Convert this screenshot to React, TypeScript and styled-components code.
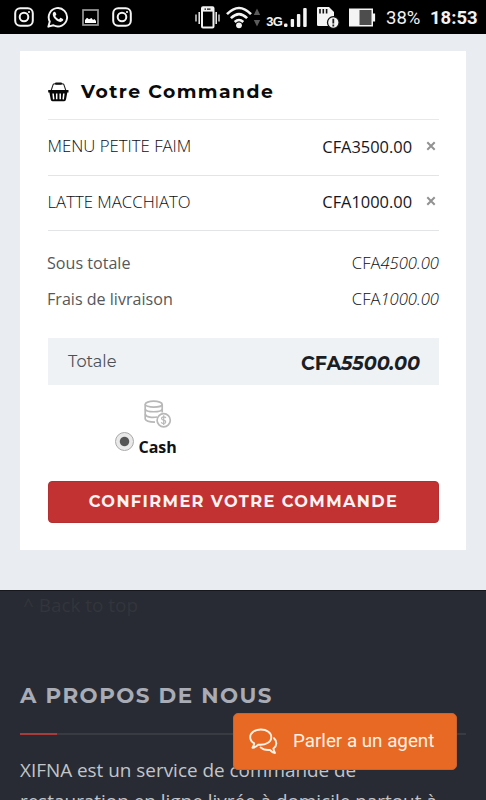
import React from "react";
import styled, { createGlobalStyle } from "styled-components";

const GlobalStyle = createGlobalStyle`
  * { box-sizing: border-box; }
  html, body { margin: 0; padding: 0; height: 800px; overflow: hidden; background: #282b34; }
  h2, h3, p { margin: 0; }
`;

const body = `"Open Sans", "Noto Sans", sans-serif`;
const display = `Montserrat, Inter, sans-serif`;

const Screen = styled.div`
  width: 486px;
  height: 800px;
  overflow: hidden;
  display: flex;
  flex-direction: column;
  font-family: ${body};
  position: relative;
`;

const StatusBar = styled.header`
  height: 34px;
  flex: none;
  background: #000;
  color: #f2f2f2;
  display: flex;
  align-items: center;
  justify-content: space-between;
  padding: 0 8px 0 14px;
`;

const StatusGroup = styled.div<{ $gap: number }>`
  display: flex;
  align-items: center;
  gap: ${(p) => p.$gap}px;
  svg { display: block; flex: none; }
`;

const StatusText = styled.span<{ $bold?: boolean; $width: number }>`
  font: ${(p) => (p.$bold ? 700 : 400)} 18.5px/34px Roboto, sans-serif;
  width: ${(p) => p.$width}px;
  white-space: nowrap;
  padding-top: 2px;
`;

const Main = styled.main`
  height: 556px;
  flex: none;
  background: #e9ecf1;
  padding: 17px 20px 0;
`;

const Card = styled.section`
  height: 499px;
  background: #fff;
  padding: 0 27px 0 28px;
  display: flex;
  flex-direction: column;
`;

const CardHeader = styled.div`
  height: 69px;
  padding-top: 14px;
  display: flex;
  align-items: center;
  gap: 12px;
  border-bottom: 1px solid #e6e8ea;
`;

const CardTitle = styled.h2`
  font: 700 18.8px/24px ${display};
  letter-spacing: 1.45px;
  color: #0a0a0b;
  white-space: nowrap;
`;

const ItemRow = styled.div`
  height: 55.5px;
  display: flex;
  align-items: center;
  border-bottom: 1px solid #e2e4e6;
`;

const ItemName = styled.span`
  flex: 1;
  font-size: 16.75px;
  line-height: 22px;
  font-weight: 300;
  color: #0d0e12;
  margin-left: -0.5px;
  padding-bottom: 2px;
`;

const ItemPrice = styled.span`
  font-size: 16.4px;
  font-weight: 500;
  color: #15161d;
  padding-bottom: 2px;
`;

const RemoveButton = styled.button`
  border: 0;
  background: none;
  padding: 0 3px 3px 0;
  width: 27px;
  display: flex;
  justify-content: flex-end;
`;

const Summary = styled.div`
  padding-top: 14px;
  height: 107px;
`;

const SummaryRow = styled.div`
  height: 36.5px;
  display: flex;
  justify-content: space-between;
  align-items: center;
  font-size: 16.1px;
  line-height: 22px;
  font-weight: 400;
  color: #56575b;
  margin-left: -1px;
  padding-bottom: 1px;
`;

const Amount = styled.span`
  font-size: 16.6px;
  font-weight: 300;
  color: #0d0e12;
`;

const TotalBar = styled.div`
  height: 47px;
  flex: none;
  background: #eef2f5;
  padding: 0 19px 0 20px;
  display: flex;
  justify-content: space-between;
  align-items: center;
`;

const TotalLabel = styled.span`
  font: 400 16.2px/20px ${display};
  color: #4d5157;
  padding-bottom: 1px;
`;

const TotalAmount = styled.span`
  font: 700 19.1px/22px ${display};
  color: #1b1f25;
  padding-top: 4px;
`;

const Payment = styled.div`
  height: 96px;
  flex: none;
  width: 130px;
  margin-left: 67px;
  padding-top: 15px;
`;

const CoinsWrap = styled.div`
  padding-left: 28px;
  height: 31px;
  svg { display: block; }
`;

const RadioLabel = styled.label`
  display: flex;
  align-items: flex-start;
  gap: 5px;
  font-size: 16px;
  line-height: 22px;
  font-weight: 700;
  color: #111217;
  span { padding-top: 5px; }
`;

const Radio = styled.i`
  width: 19px;
  height: 19px;
  margin-top: 1px;
  margin-left: -0.5px;
  border-radius: 50%;
  border: 1.5px solid #a9a9a9;
  background: radial-gradient(circle, #555 0 4.2px, #e9e9e9 5.2px);
`;

const ConfirmButton = styled.button`
  height: 42px;
  flex: none;
  border: 1px solid #b32f30;
  border-radius: 4px;
  background: #c23232;
  color: #fdf3f2;
  font: 700 16.2px/20px ${display};
  letter-spacing: 1.38px;
  padding: 0 0 3px;
  white-space: nowrap;
`;

const Footer = styled.footer`
  flex: 1;
  background: #282b34;
  border-top: 1px solid #15171d;
  padding: 0 20px;
`;

const BackToTop = styled.div`
  color: #32353b;
  font-size: 18.9px;
  line-height: 28px;
  white-space: pre;
  padding-left: 3px;
`;

const FooterTitle = styled.h3`
  margin-top: 63px;
  font: 700 21.4px/26px ${display};
  letter-spacing: 1.5px;
  color: #a9acb4;
  white-space: nowrap;
`;

const Divider = styled.div`
  margin-top: 25px;
  height: 2px;
  background: linear-gradient(90deg, #a93c3a 37px, #393b42 37px);
`;

const About = styled.p`
  margin-top: 20px;
  font-size: 18.9px;
  line-height: 31px;
  color: #c3c5c9;
  white-space: nowrap;
`;

const ChatButton = styled.button`
  position: absolute;
  left: 233px;
  top: 713px;
  width: 224px;
  height: 57px;
  border: 1px solid #c76532;
  border-radius: 5px;
  background: #e86924;
  color: #fff1e4;
  display: flex;
  align-items: center;
  gap: 15px;
  padding: 0 0 1px 15px;
  font: 400 18.8px/24px Roboto, sans-serif;
  white-space: nowrap;
`;

const InstagramIcon = () => (
  <svg width="20" height="20" viewBox="0 0 20 20" fill="none" stroke="#f4f4f4" strokeWidth="2">
    <rect x="1.2" y="1.2" width="17.6" height="17.6" rx="5" />
    <circle cx="10" cy="10" r="4.3" />
    <circle cx="15" cy="5" r="1.1" fill="#f4f4f4" stroke="none" />
  </svg>
);

const WhatsAppIcon = () => (
  <svg width="22" height="22" viewBox="0 0 23 23">
    <path d="M1.4 21.6 2.9 16.2A9.6 9.6 0 1 1 6.7 20.1Z" fill="none" stroke="#f4f4f4" strokeWidth="2" strokeLinejoin="round" />
    <path d="M7.7 6.1c-.7 0-1.7 1-1.7 2.5 0 3.6 4.7 8 8.2 8 1.5 0 2.8-1.1 2.8-2.4 0-.6-2.4-1.8-2.9-1.8-.5.1-1 1.4-1.5 1.5-.8 0-3.8-2.6-3.8-3.5 0-.4 1-.9 1-1.4S8.9 6 7.7 6.1Z" fill="#f4f4f4" />
  </svg>
);

const PictureIcon = () => (
  <svg width="17" height="17" viewBox="0 0 17 17">
    <rect x="1" y="1" width="15" height="15" fill="none" stroke="#9a9a9a" strokeWidth="1.7" />
    <path d="M3 14V11L5 8.8 7 10.2 9.5 9 11 11 12.5 10 14 12V14Z" fill="#fff" />
  </svg>
);

const VibrateIcon = () => (
  <svg width="25" height="23" viewBox="0 0 25 23" stroke="#f2f2f2" fill="none">
    <rect x="7" y="1.3" width="11.5" height="20.2" rx="1" strokeWidth="2" />
    <path d="M7 3.6H18.5" strokeWidth="4" />
    <path d="M9.5 3.2h1.5M12 3.2h3.5" stroke="#111" strokeWidth="1.2" />
    <path d="M4.2 6V18M21.2 6V18" strokeWidth="1.5" />
    <path d="M1 8.5V15.5M24 8.5V15.5" strokeWidth="1.3" />
  </svg>
);

const WifiIcon = () => (
  <svg width="35" height="23" viewBox="0 0 35 23" fill="none" stroke="#f4f4f4" strokeWidth="2.6">
    <path d="M1 8.2Q13 -4.2 25 8.2" />
    <path d="M4.9 12.1Q13 4 21.1 12.1" />
    <path d="M8.7 16Q13 12 17.3 16" />
    <circle cx="13" cy="19.3" r="2.9" fill="#f4f4f4" stroke="none" />
    <path d="M31 2.5 34.2 9H27.8ZM31 20.5 34.2 14H27.8Z" fill="#5b5b5b" stroke="none" />
  </svg>
);

const NetworkLabel = styled.span`
  font: 700 13px/16px "Liberation Sans", sans-serif;
  letter-spacing: -0.7px;
  padding-top: 10px;
  width: 17px;
`;

const SignalIcon = () => (
  <svg width="23" height="21" viewBox="0 0 23 21" fill="#f4f4f4">
    <rect x="0" y="16.5" width="3.5" height="3.5" rx="1.2" />
    <rect x="6.7" y="12" width="3.4" height="8" rx="1" />
    <rect x="12.9" y="7" width="3.4" height="13" rx="1" />
    <rect x="19.2" y="1" width="3.5" height="19" rx="1" />
  </svg>
);

const SdCardIcon = () => (
  <svg width="23" height="23" viewBox="0 0 23 23">
    <path d="M0 2.3A1.3 1.3 0 0 1 1.3 1H12L17 6V20H1.3A1.3 1.3 0 0 1 0 18.7Z" fill="#f4f4f4" />
    <path d="M3 3v4.6M6.3 3v4.6M9.6 3v4.6" stroke="#111" strokeWidth="1.6" />
    <circle cx="16.3" cy="16.5" r="5.8" fill="#f4f4f4" stroke="#111" strokeWidth="1.3" />
    <path d="M16.3 12.7v4.8M16.3 18.6v1.8" stroke="#222" strokeWidth="1.8" />
  </svg>
);

const BatteryIcon = () => (
  <svg width="27" height="19" viewBox="0 0 27 19">
    <rect x="0" y="0.5" width="24" height="18" fill="#f4f4f4" />
    <rect x="10.5" y="2" width="12" height="15" fill="#4d4d4d" />
    <rect x="23.5" y="5.5" width="2.6" height="8" fill="#f4f4f4" />
  </svg>
);

const BasketIcon = () => (
  <svg width="21" height="20" viewBox="0 0 21 20">
    <path d="M3 9 5.1 2.6Q5.4 1.8 7 1.8H14Q15.6 1.8 15.9 2.6L18 9" fill="none" stroke="#222" strokeWidth="1.1" />
    <rect x="7" y="0.6" width="7" height="2.2" rx="1" fill="#111" />
    <path d="M.2 8H20.5V10.6H19.3L18 17.6Q17.7 19.3 16.2 19.3H4.5Q3 19.3 2.7 17.6L1.4 10.6H.2Z" fill="#080808" />
    <path d="M5.1 11.5 5.7 17.3M8.7 11.5V17.3M12.2 11.5V17.3M15.8 11.5 15.2 17.3" stroke="#fff" strokeWidth="1.5" />
  </svg>
);

const CrossIcon = () => (
  <svg width="10" height="10" viewBox="0 0 10 10" stroke="#929292" strokeWidth="2">
    <path d="M1.3 1.3 8.7 8.7M8.7 1.3 1.3 8.7" />
  </svg>
);

const CoinsIcon = () => (
  <svg width="29" height="29" viewBox="0 0 29 29" fill="none" stroke="#b8b8b8" strokeWidth="1.7">
    <ellipse cx="10.7" cy="4.2" rx="8.5" ry="3" />
    <path d="M2.2 4.2V19Q3 22 12 22.2M19.2 4.2V12.5" />
    <path d="M2.2 9.2C3.2 12.6 18.2 12.6 19.2 9.2M2.2 14.2C3.2 17.4 9.7 17.9 14.2 17" />
    <circle cx="20.7" cy="20.2" r="6.6" fill="#fff" />
    <path d="M23 17.8Q22 16.6 20.3 16.9C17.8 17.4 18.1 19.7 20.6 20.1 23.6 20.7 23.2 23.2 20.9 23.4Q19 23.6 18.2 22.2M20.7 15.3V25" strokeWidth="1.2" />
  </svg>
);

const ChatIcon = () => (
  <svg width="29" height="28" viewBox="0 0 29 28" fill="none" stroke="#fff1e4" strokeWidth="1.9" strokeLinejoin="round" strokeLinecap="round">
    <path d="M11.8 2.5C5.5 2.5 1.2 6 1.2 10.2c0 2.9 1.6 4.8 4 6.2-.1 1.8-.8 3-1.7 4.4 2.5-.4 4.3-1.5 5.6-3.2 7.6.9 13.2-2.8 13.2-7.4 0-4.3-4.3-7.7-10.5-7.7Z" />
    <path d="M25 11.2c3.3 3 3.2 7.6-.6 10.3.1 1.4.7 2.8 1.6 4.5-2.3-.4-4-1.6-5.1-3.1-4.1.4-7.2-.5-9.3-2.5" />
  </svg>
);

const items = [
  { name: "MENU PETITE FAIM", price: "CFA3500.00" },
  { name: "LATTE MACCHIATO", price: "CFA1000.00" },
];

const fees = [
  { label: "Sous totale", value: "4500.00" },
  { label: "Frais de livraison", value: "1000.00" },
];

export default function App() {
  return (
    <Screen>
      <GlobalStyle />
      <StatusBar>
        <StatusGroup $gap={13}>
          <InstagramIcon />
          <WhatsAppIcon />
          <PictureIcon />
          <InstagramIcon />
        </StatusGroup>
        <StatusGroup $gap={9.6}>
          <StatusGroup $gap={5}>
            <StatusGroup $gap={6}>
              <VibrateIcon />
              <WifiIcon />
            </StatusGroup>
            <StatusGroup $gap={1}>
              <NetworkLabel>3G</NetworkLabel>
              <SignalIcon />
            </StatusGroup>
          </StatusGroup>
          <SdCardIcon />
          <BatteryIcon />
          <StatusGroup $gap={8}>
            <StatusText $width={36}>38%</StatusText>
            <StatusText $bold $width={48}>18:53</StatusText>
          </StatusGroup>
        </StatusGroup>
      </StatusBar>
      <Main>
        <Card>
          <CardHeader>
            <BasketIcon />
            <CardTitle>Votre Commande</CardTitle>
          </CardHeader>
          {items.map((item) => (
            <ItemRow key={item.name}>
              <ItemName>{item.name}</ItemName>
              <ItemPrice>{item.price}</ItemPrice>
              <RemoveButton aria-label="Supprimer">
                <CrossIcon />
              </RemoveButton>
            </ItemRow>
          ))}
          <Summary>
            {fees.map((fee) => (
              <SummaryRow key={fee.label}>
                <span>{fee.label}</span>
                <Amount>CFA<em>{fee.value}</em></Amount>
              </SummaryRow>
            ))}
          </Summary>
          <TotalBar>
            <TotalLabel>Totale</TotalLabel>
            <TotalAmount>CFA<em>5500.00</em></TotalAmount>
          </TotalBar>
          <Payment>
            <CoinsWrap><CoinsIcon /></CoinsWrap>
            <RadioLabel>
              <Radio />
              <span>Cash</span>
            </RadioLabel>
          </Payment>
          <ConfirmButton>CONFIRMER VOTRE COMMANDE</ConfirmButton>
        </Card>
      </Main>
      <Footer>
        <BackToTop>^ Back to top</BackToTop>
        <FooterTitle>A PROPOS DE NOUS</FooterTitle>
        <Divider />
        <About>
          XIFNA est un service de commande de
          <br />
          restauration en ligne livrée à domicile partout à
        </About>
      </Footer>
      <ChatButton>
        <ChatIcon />
        Parler a un agent
      </ChatButton>
    </Screen>
  );
}
